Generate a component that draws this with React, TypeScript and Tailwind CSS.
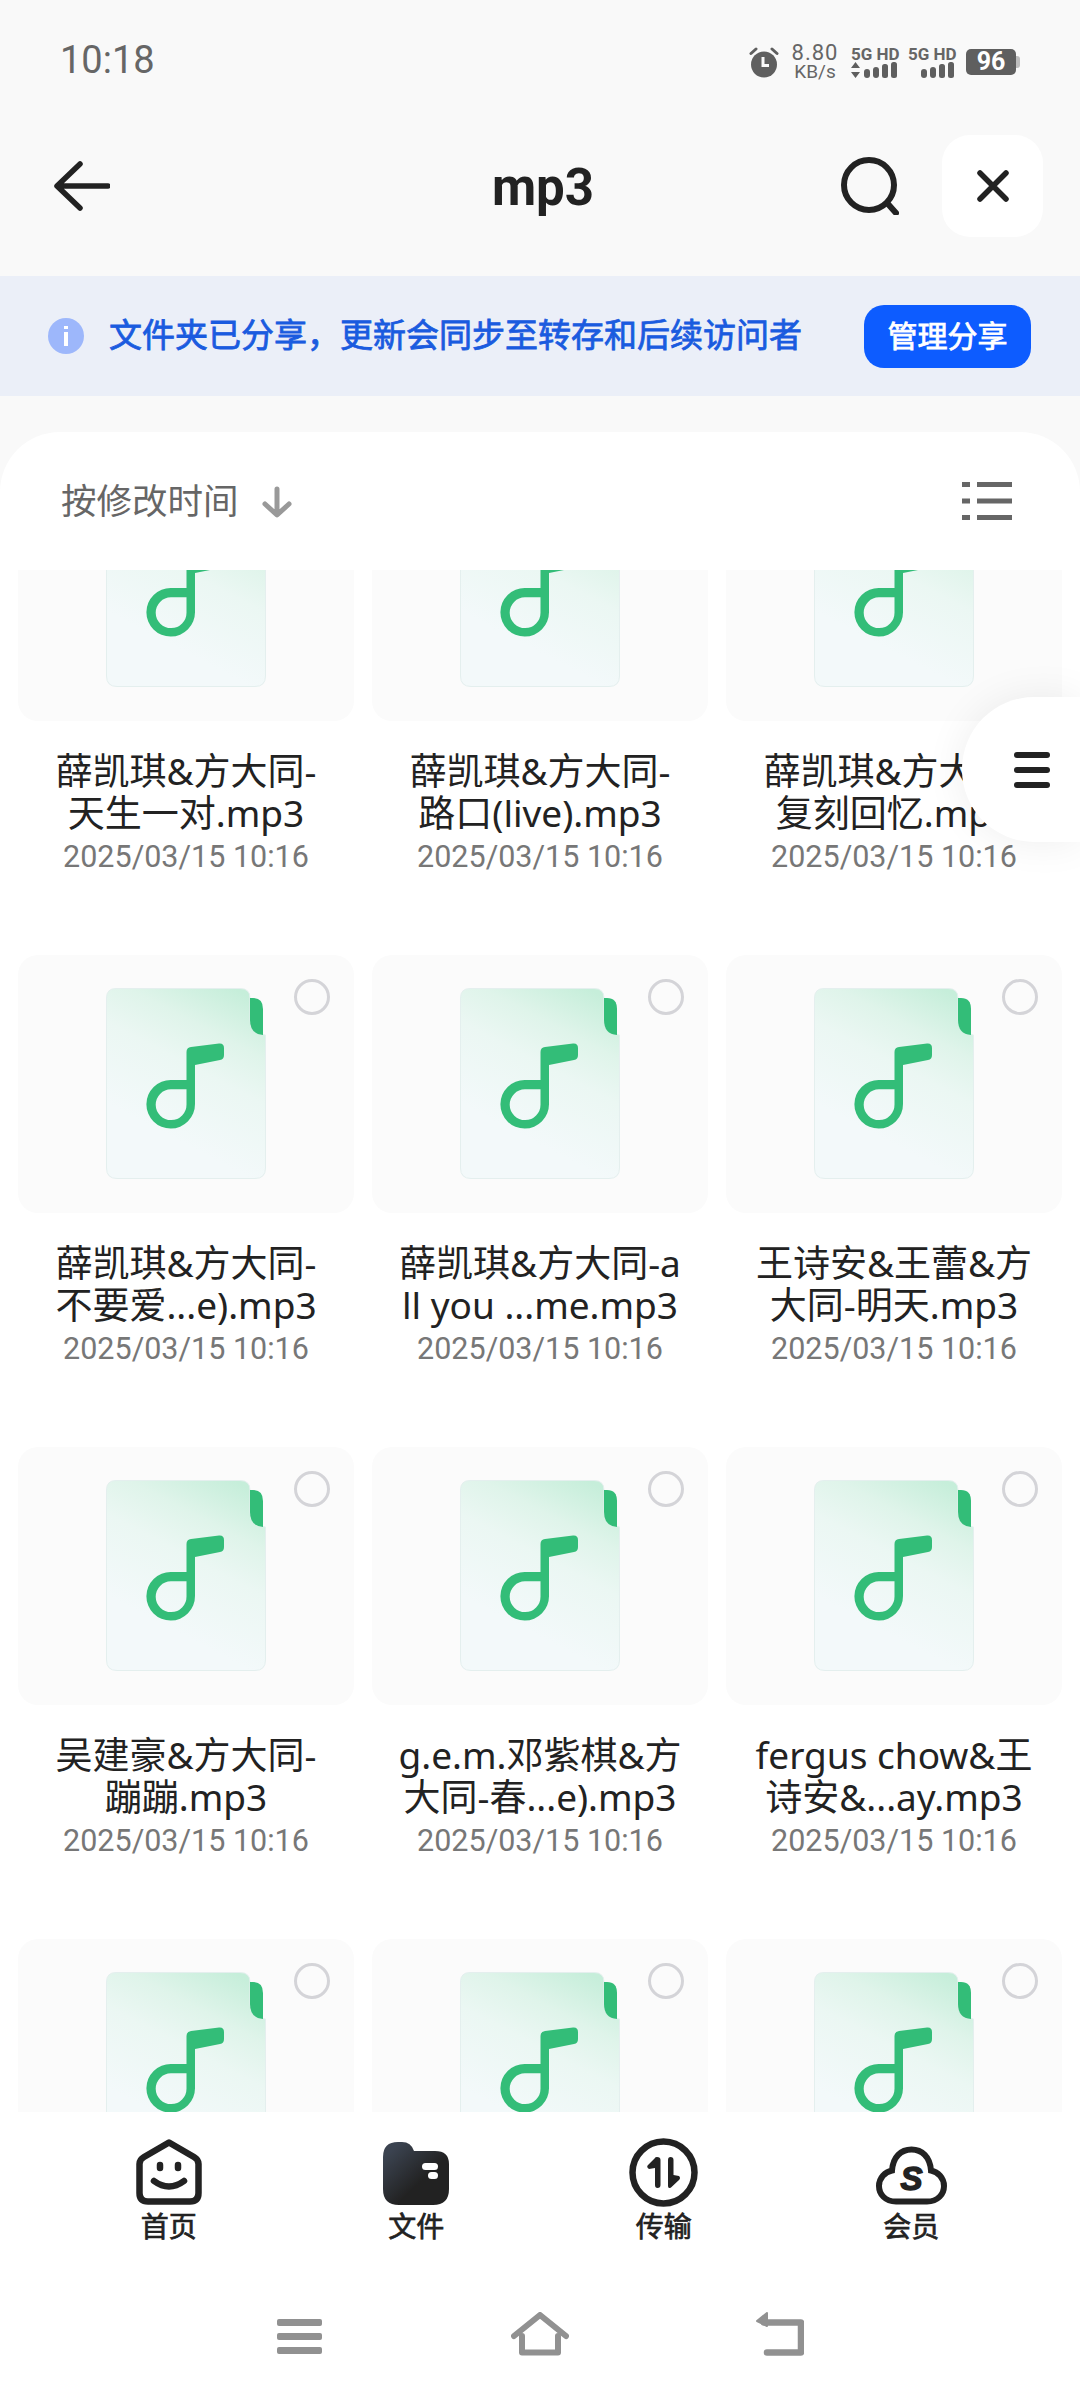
import { Fragment } from "react";

// the last row is cut off by the bottom bar, so it has no names
const files: (string[] | null)[] = [
  ["薛凯琪&方大同-", "天生一对.mp3"],
  ["薛凯琪&方大同-", "路口(live).mp3"],
  ["薛凯琪&方大同-", "复刻回忆.mp3"],
  ["薛凯琪&方大同-", "不要爱...e).mp3"],
  ["薛凯琪&方大同-a", "ll you ...me.mp3"],
  ["王诗安&王蕾&方", "大同-明天.mp3"],
  ["吴建豪&方大同-", "蹦蹦.mp3"],
  ["g.e.m.邓紫棋&方", "大同-春...e).mp3"],
  ["fergus chow&王", "诗安&...ay.mp3"],
  null,
  null,
  null,
];

const Signal = ({ arrows }: { arrows?: boolean }) => (
  <svg width="47" height="17" viewBox="0 0 47 17" fill="#5f5f5f">
    {arrows && <path d="M0 6 L4.500 0 L9 6 Z M0 10 H9 L4.500 16 Z" />}
    <rect x="13" y="7" width="6" height="9" rx="3" />
    <rect x="22" y="5" width="6" height="11" rx="3" />
    <rect x="31" y="2" width="6" height="14" rx="2.500" />
    <rect x="40" y="0" width="6" height="16" rx="2.500" />
  </svg>
);

const StatusBar = () => (
  <div className="flex h-[100px] shrink-0 items-start justify-between pl-[60px] pr-[60px] pt-[39px] text-[#666]">
    <span className="text-[38px] leading-[42px]">10:18</span>
    <div className="mt-[4px] flex items-center">
      <svg width="30" height="31" viewBox="0 0 30 31" fill="none">
        <circle cx="15" cy="17.500" r="13" fill="#5f5f5f" />
        <path d="M14 10 V18.500 H20" stroke="#f9f9f9" strokeWidth="3" />
        <path d="M2 6.500 L7 2 M28 6.500 L23 2" stroke="#5f5f5f" strokeWidth="3" strokeLinecap="round" />
      </svg>
      <div className="ml-[11px] flex w-[50px] flex-col items-center">
        <span className="text-[22px] leading-[20px] tracking-[1px]">8.80</span>
        <span className="text-[19px] leading-[18px]">KB/s</span>
      </div>
      <div className="ml-[11px] flex w-[47px] flex-col">
        <span className="whitespace-nowrap text-[17px] font-bold leading-[16px]">5G HD</span>
        <Signal arrows />
      </div>
      <div className="ml-[10px] flex w-[47px] flex-col">
        <span className="whitespace-nowrap text-[17px] font-bold leading-[16px]">5G HD</span>
        <Signal />
      </div>
      <div className="ml-[11px] flex items-center">
        <span className="flex h-[26px] w-[50px] items-center justify-center rounded-[5px] bg-[#5f5f5f] text-[25px] font-bold text-white">
          96
        </span>
        <span className="h-[12px] w-[4px] rounded-r-[3px] bg-[#bdbdbd]" />
      </div>
    </div>
  </div>
);

const Header = () => (
  <div className="flex h-[176px] shrink-0 items-center pb-[4px] pl-[54px] pr-[37px]">
    <svg width="56" height="50" viewBox="0 0 56 50" fill="none" stroke="#222" strokeWidth="5.500" strokeLinecap="round" strokeLinejoin="round">
      <path d="M26 3 L3 25 L26 47 M4 25 H54" />
    </svg>
    <span className="ml-[333px] mt-[4px] w-[200px] text-center text-[51px] font-bold leading-[56px] text-[#222]">mp3</span>
    <svg className="ml-auto" width="58" height="58" viewBox="0 0 58 58" fill="none" stroke="#222" strokeWidth="6" strokeLinecap="round">
      <circle cx="28" cy="28" r="25" />
      <path d="M47 47 L55 56" />
    </svg>
    <button className="ml-[43px] flex h-[102px] w-[101px] items-center justify-center rounded-[28px] bg-white">
      <svg width="32" height="32" viewBox="0 0 32 32" fill="none" stroke="#222" strokeWidth="5.500" strokeLinecap="round">
        <path d="M3 3 L29 29 M29 3 L3 29" />
      </svg>
    </button>
  </div>
);

const Banner = () => (
  <div className="flex h-[120px] shrink-0 items-center bg-[#ebeff8] pl-[48px] pr-[49px]">
    <span className="relative h-[36px] w-[36px] shrink-0 rounded-full bg-[#9db7fb]">
      <span className="absolute left-[16px] top-[8px] h-[3px] w-[4px] bg-white" />
      <span className="absolute left-[16px] top-[14px] h-[14px] w-[4px] bg-white" />
    </span>
    <span className="ml-[25px] whitespace-nowrap text-[33px] leading-[44px] text-[#1a5bdf] [-webkit-text-stroke:0.8px]">
      文件夹已分享，更新会同步至转存和后续访问者
    </span>
    <button className="ml-auto flex h-[63px] w-[167px] items-center justify-center rounded-[20px] bg-[#0d5cff] text-[30px] text-white [-webkit-text-stroke:0.8px]">
      管理分享
    </button>
  </div>
);

const FileIcon = () => (
  <svg width="160" height="191" viewBox="0 0 160 191" fill="none">
    <defs>
      <linearGradient id="docFill" x1="0.8" y1="0" x2="0.45" y2="0.8">
        <stop offset="0" stopColor="#c6eeda" />
        <stop offset="0.3" stopColor="#dff4ea" />
        <stop offset="0.55" stopColor="#ebf7f3" />
        <stop offset="1" stopColor="#f3f9fa" />
      </linearGradient>
    </defs>
    <path
      d="M10 0.500 H134 Q144 0.500 144 10 V32 Q144 46 159.500 47 V180 Q159.500 190.500 149 190.500 H11 Q0.500 190.500 0.500 180 V10 Q0.500 0.500 10 0.500 Z"
      fill="url(#docFill)"
      stroke="#e4efee"
    />
    <path d="M144 10 H147 Q157 10 157 21 V47 Q144 46 144 32 Z" fill="#33bd78" />
    <path
      fillRule="evenodd"
      d="M80.500 64 Q80.500 59.500 85 59 L113 55.500 Q118 55 118 60 V67 Q118 71.500 114 72 L89 77 V116 A24.300 24.300 0 1 1 65 92 H80.500 Z M80.500 101.300 H65 A15.400 15.400 0 1 0 80.500 116.500 Z"
      fill="#33bd78"
    />
  </svg>
);

const FileItem = ({ lines }: { lines: string[] | null }) => (
  <div className="flex h-[492px] flex-col items-center overflow-hidden">
    <div className="relative flex h-[258px] w-full shrink-0 justify-center rounded-[20px] bg-[#fbfbfb] pt-[33px]">
      <FileIcon />
      <span className="absolute left-[276px] top-[24px] h-[36px] w-[36px] rounded-full border-[3px] border-[#d4d4d8]" />
    </div>
    {lines && (
      <>
        <p className="mt-[29px] whitespace-nowrap text-center font-['Noto_Sans','Noto_Sans_CJK_SC',sans-serif] text-[37px] leading-[42px] text-[#222]">
          {lines.map((l) => (
            <Fragment key={l}>
              {l}
              <br />
            </Fragment>
          ))}
        </p>
        <span className="mt-[3px] text-[30.500px] leading-[40px] text-[#777]">2025/03/15 10:16</span>
      </>
    )}
  </div>
);

const Sheet = () => (
  <div className="relative flex min-h-0 flex-1 flex-col rounded-t-[60px] bg-white">
    <div className="flex h-[138px] shrink-0 items-center pl-[61px] pr-[68px]">
      <span className="mt-[2px] text-[35.500px] leading-[44px] text-[#666]">按修改时间</span>
      <svg className="ml-[23px] mt-[2px]" width="30" height="32" viewBox="0 0 30 32" fill="none" stroke="#999" strokeWidth="5" strokeLinecap="round" strokeLinejoin="round">
        <path d="M15 3 V28 M3 18 L15 29 L27 18" />
      </svg>
      <svg className="ml-auto" width="50" height="38" viewBox="0 0 50 38" fill="#666">
        <rect x="0" y="0" width="8" height="5" />
        <rect x="15" y="0" width="35" height="5" />
        <rect x="0" y="16.500" width="8" height="5" />
        <rect x="15" y="16.500" width="35" height="5" />
        <rect x="0" y="33" width="8" height="5" />
        <rect x="15" y="33" width="35" height="5" />
      </svg>
    </div>
    <div className="min-h-0 flex-1 overflow-hidden px-[18px]">
      <div className="-mt-[107px] grid grid-cols-3 gap-x-[18px]">
        {files.map((f, i) => (
          <FileItem key={i} lines={f} />
        ))}
      </div>
    </div>
    <div className="absolute right-0 top-[265px] flex h-[145px] w-[118px] items-center rounded-l-[72px] bg-white pl-[52px] shadow-[0_0_40px_rgba(0,0,0,0.07)]">
      <div className="flex w-[36px] flex-col gap-[9px]">
        <span className="h-[6px] rounded-full bg-[#222]" />
        <span className="h-[6px] rounded-full bg-[#222]" />
        <span className="h-[6px] rounded-full bg-[#222]" />
      </div>
    </div>
  </div>
);

const NavItem = ({ label, children }: { label: string; children: React.ReactNode }) => (
  <div className="flex flex-col items-center">
    <div className="flex h-[70px] items-end">{children}</div>
    <span className="mt-[5px] text-[28px] leading-[32px] text-[#222] [-webkit-text-stroke:0.7px]">{label}</span>
  </div>
);

const BottomNav = () => (
  <div className="shrink-0 bg-white">
    <div className="grid h-[202px] grid-cols-4 px-[45px] pt-[25px]">
      <NavItem label="首页">
        <svg className="mb-[2px]" width="66" height="66" viewBox="0 0 66 66" fill="none" stroke="#222" strokeWidth="6.500" strokeLinecap="round" strokeLinejoin="round">
          <path d="M33 3.500 L58 18 Q62.500 20.500 62.500 25 V54 Q62.500 62.500 54 62.500 H12 Q3.500 62.500 3.500 54 V25 Q3.500 20.500 8 18 Z" />
          <path d="M18 42 Q33 53 48 42" />
          <path d="M24 26 V29 M42 26 V29" strokeWidth="6.500" />
        </svg>
      </NavItem>
      <NavItem label="文件">
        <svg className="mb-[2px]" width="66" height="63" viewBox="0 0 66 63">
          <defs>
            <linearGradient id="folderFill" x1="0.05" y1="0.05" x2="0.6" y2="0.6">
              <stop offset="0.15" stopColor="#3b4350" />
              <stop offset="1" stopColor="#222" />
            </linearGradient>
          </defs>
          <path d="M0 15 Q0 0 15 0 H19 Q28 0 31 9 H52 Q66 9 66 22 V47 Q66 63 50 63 H16 Q0 63 0 47 Z" fill="url(#folderFill)" />
          <rect x="39" y="21" width="16" height="7" rx="3.500" fill="#fff" />
          <rect x="45" y="30" width="10" height="7" rx="3.500" fill="#fff" />
        </svg>
      </NavItem>
      <NavItem label="传输">
        <svg width="69" height="69" viewBox="0 0 69 69" fill="none">
          <circle cx="34.500" cy="34.500" r="31" stroke="#222" strokeWidth="6.500" />
          <path d="M26 20 Q26 19 28 19 Q31.500 19 31.500 22 V47 Q31.500 50 28.500 50 Q26 50 26 47 V30 L20 31 Q17 29 19 27 Z" fill="#222" />
          <path d="M39 22 Q39 19 41.500 19 Q44.500 19 44.500 22 V37 L50 38 Q52 40 50 42 L42 49.500 Q39 51 39 48 Z" fill="#222" />
        </svg>
      </NavItem>
      <NavItem label="会员">
        <svg className="mb-[2px]" width="71" height="59" viewBox="0 0 71 59" fill="none">
          <path
            d="M20 55.500 H51 C62 55.500 68 48 68 40 C68 32 62 26 55 24.500 C54 11 46 3.500 35.500 3.500 C25 3.500 17 11 16 24.500 C9 26 3 32 3 40 C3 48 9 55.500 20 55.500 Z"
            stroke="#222"
            strokeWidth="6"
          />
          <text x="35.500" y="44" textAnchor="middle" fontFamily="Liberation Sans" fontWeight="700" fontStyle="italic" fontSize="33" fill="#222" stroke="#222" strokeWidth="1.500">
            S
          </text>
        </svg>
      </NavItem>
    </div>
    <div className="relative flex h-[86px] items-start">
      <div className="ml-[277px] mt-[5px] flex w-[45px] flex-col gap-[7px]">
        <span className="h-[7px] rounded-[2px] bg-[#919191]" />
        <span className="h-[7px] rounded-[2px] bg-[#919191]" />
        <span className="h-[7px] rounded-[2px] bg-[#919191]" />
      </div>
      <svg className="ml-[189px] -mt-[2px]" width="58" height="44" viewBox="0 0 58 44" fill="none" stroke="#919191" strokeWidth="6" strokeLinecap="round" strokeLinejoin="round">
        <path d="M3 24 L29 3 L55 24" />
        <path d="M11 24 V40.500 H47 V24" />
      </svg>
      <svg className="ml-[187px] -mt-[2px]" width="48" height="44" viewBox="0 0 48 44" fill="none">
        <path d="M1 9 L11 1 V14 Z" fill="#919191" stroke="#919191" strokeWidth="2" strokeLinejoin="round" />
        <path d="M8 10.500 H45 V40.500 H11" stroke="#919191" strokeWidth="6.500" strokeLinecap="round" strokeLinejoin="round" />
      </svg>
    </div>
  </div>
);

export default function App() {
  return (
    <div className="flex h-[2400px] w-[1080px] flex-col overflow-hidden bg-[#f9f9f9] font-['Roboto','Noto_Sans_CJK_SC',sans-serif]">
      <StatusBar />
      <Header />
      <Banner />
      <div className="h-[36px] shrink-0" />
      <Sheet />
      <BottomNav />
    </div>
  );
}
